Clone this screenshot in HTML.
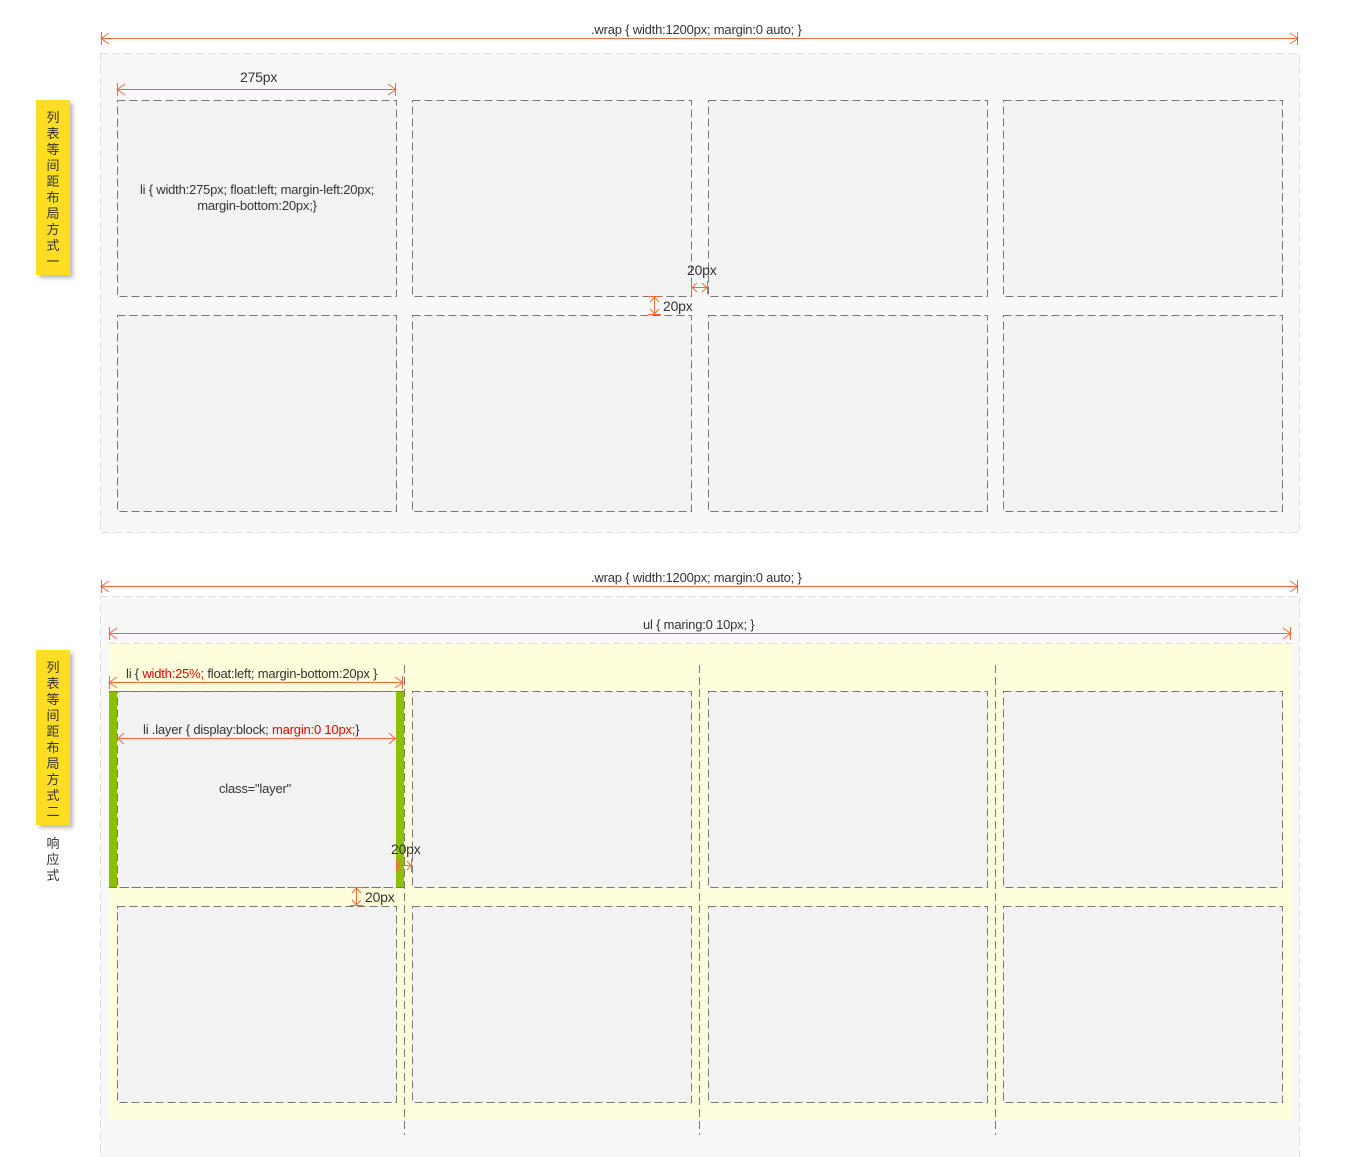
<!DOCTYPE html>
<html><head><meta charset="utf-8"><style>
body{margin:0;width:1352px;height:1157px;background:#fff;position:relative;overflow:hidden;font-family:"Liberation Sans","Noto Sans CJK SC",sans-serif;color:#333}
.a{position:absolute;box-sizing:border-box}
.tag{background:#ffdd22;width:34px;height:175px;box-shadow:3px 3px 4px #bbb;font-size:13px;line-height:16px;text-align:center;padding-top:10px;color:#333}
.t{position:absolute;font-size:13px;white-space:nowrap;color:#333;letter-spacing:-0.2px}
.r{color:#e00}
</style></head><body>
<svg class="a" style="left:0;top:0" width="1352" height="1157">
<g fill="#f8f8f8" stroke="#ddd" stroke-dasharray="8,4">
<rect x="100.5" y="53.5" width="1199" height="479"/>
<rect x="100.5" y="596.5" width="1199" height="561"/>
</g>
<rect x="109" y="643" width="1183" height="477" fill="#fefedc"/>
<line x1="109" y1="643.5" x2="1292" y2="643.5" stroke="#ddd" stroke-dasharray="8,4"/>
<g fill="#f2f2f2" stroke="#777" stroke-dasharray="8,4">
<rect x="117.5" y="100.5" width="279" height="196"/>
<rect x="412.5" y="100.5" width="279" height="196"/>
<rect x="708.5" y="100.5" width="279" height="196"/>
<rect x="1003.5" y="100.5" width="279" height="196"/>
<rect x="117.5" y="315.5" width="279" height="196"/>
<rect x="412.5" y="315.5" width="279" height="196"/>
<rect x="708.5" y="315.5" width="279" height="196"/>
<rect x="1003.5" y="315.5" width="279" height="196"/>
<rect x="117.5" y="691.5" width="279" height="196"/>
<rect x="412.5" y="691.5" width="279" height="196"/>
<rect x="708.5" y="691.5" width="279" height="196"/>
<rect x="1003.5" y="691.5" width="279" height="196"/>
<rect x="117.5" y="906.5" width="279" height="196"/>
<rect x="412.5" y="906.5" width="279" height="196"/>
<rect x="708.5" y="906.5" width="279" height="196"/>
<rect x="1003.5" y="906.5" width="279" height="196"/>
</g>
<rect x="109" y="691" width="8" height="197" fill="#8cc000"/>
<rect x="396" y="691" width="8" height="197" fill="#8cc000"/>
<g stroke="#777" stroke-dasharray="8,4" stroke-width="1">
<line x1="109" y1="691.5" x2="404" y2="691.5"/>
<line x1="109" y1="887.5" x2="404" y2="887.5"/>
<line x1="404.5" y1="665" x2="404.5" y2="1135"/>
<line x1="699.5" y1="665" x2="699.5" y2="1135"/>
<line x1="995.5" y1="665" x2="995.5" y2="1135"/>
</g>
<g stroke="#f26a3c" stroke-width="1" fill="none">
<path d="M101 38.5H1298M101.5 32v13M1297.5 32v13M109 33l-8 5.5 8 5.5M1290 33l8 5.5-8 5.5"/>
<path d="M117 89.5H396M117.5 83v13M395.5 83v13M125 84l-8 5.5 8 5.5M388 84l8 5.5-8 5.5"/>
<path d="M691 287.5H708M691.5 281v13M707.5 281v13M697 283l-5 4.5 5 4.5M702 283l5 4.5-5 4.5"/>
<path d="M654.5 296V315M648 296.5h13M648 314.5h13M650 302l4.5-5 4.5 5M650 309l4.5 5 4.5-5"/>
<path d="M101 586.5H1298M101.5 580v13M1297.5 580v13M109 581l-8 5.5 8 5.5M1290 581l8 5.5-8 5.5"/>
<path d="M109 633.5H1291M109.5 627v13M1290.5 627v13M117 628l-8 5.5 8 5.5M1283 628l8 5.5-8 5.5"/>
<path d="M109 682.5H403M109.5 676v13M402.5 676v13M117 677l-8 5.5 8 5.5M395 677l8 5.5-8 5.5"/>
<path d="M117 738.5H396M124 733l-6 5.5 6 5.5M389 733l6 5.5-6 5.5"/>
<path d="M396 865.5H412M396.5 859v13M411.5 859v13M401 861l-4 4.5 4 4.5M407 861l4 4.5-4 4.5"/>
<path d="M356.5 887V906M350 887.5h13M350 905.5h13M352 893l4.5-5 4.5 5M352 900l4.5 5 4.5-5"/>
</g>
</svg>

<div class="t" style="left:591px;top:22px">.wrap { width:1200px; margin:0 auto; }</div>
<div class="t" style="left:240px;top:69px;font-size:14px">275px</div>
<div class="t" style="left:117px;top:182px;width:280px;text-align:center;line-height:16px">li { width:275px; float:left; margin-left:20px;<br>margin-bottom:20px;}</div>
<div class="t" style="left:687px;top:262px;font-size:14px">20px</div>
<div class="t" style="left:663px;top:298px;font-size:14px">20px</div>
<div class="t" style="left:591px;top:570px">.wrap { width:1200px; margin:0 auto; }</div>
<div class="t" style="left:643px;top:617px">ul { maring:0 10px; }</div>
<div class="t" style="left:126px;top:666px">li { <span class="r">width:25%;</span> float:left; margin-bottom:20px }</div>
<div class="t" style="left:143px;top:722px">li .layer { display:block; <span class="r">margin:0 10px;</span>}</div>
<div class="t" style="left:219px;top:781px">class="layer"</div>
<div class="t" style="left:391px;top:841px;font-size:14px">20px</div>
<div class="t" style="left:365px;top:889px;font-size:14px">20px</div>

<div class="a tag" style="left:36px;top:100px">列<br>表<br>等<br>间<br>距<br>布<br>局<br>方<br>式<br>一</div>
<div class="a tag" style="left:36px;top:650px">列<br>表<br>等<br>间<br>距<br>布<br>局<br>方<br>式<br>二</div>
<div class="a" style="left:36px;top:836px;width:34px;text-align:center;font-size:13px;line-height:16px">响<br>应<br>式</div>
</body></html>
